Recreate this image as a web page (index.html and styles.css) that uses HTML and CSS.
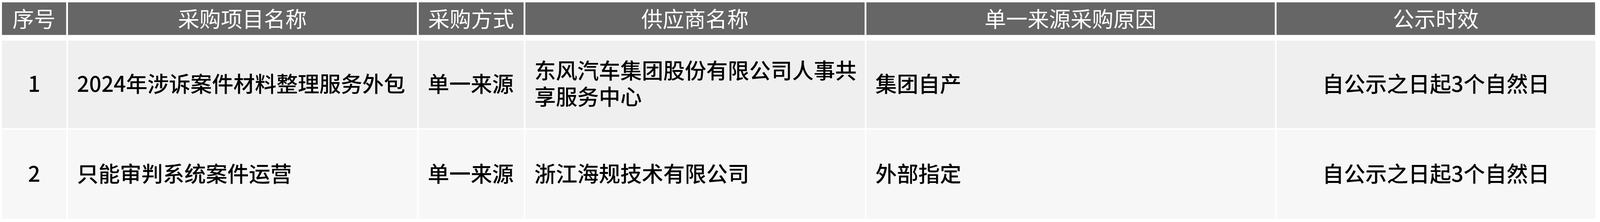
FILE: index.html
```html
<!DOCTYPE html>
<html lang="zh-CN">
<head>
<meta charset="utf-8">
<title>单一来源采购公示</title>
<link rel="stylesheet" href="styles.css">
</head>
<body>
<div class="grid">
  <div class="th">序号</div>
  <div class="th">采购项目名称</div>
  <div class="th">采购方式</div>
  <div class="th">供应商名称</div>
  <div class="th">单一来源采购原因</div>
  <div class="th">公示时效</div>

  <div class="td r1 center">1</div>
  <div class="td r1">2024年涉诉案件材料整理服务外包</div>
  <div class="td r1">单一来源</div>
  <div class="td r1">东风汽车集团股份有限公司人事共享服务中心</div>
  <div class="td r1">集团自产</div>
  <div class="td r1 center">自公示之日起3个自然日</div>

  <div class="td r2 center">2</div>
  <div class="td r2">只能审判系统案件运营</div>
  <div class="td r2">单一来源</div>
  <div class="td r2">浙江海规技术有限公司</div>
  <div class="td r2">外部指定</div>
  <div class="td r2 center">自公示之日起3个自然日</div>
</div>
</body>
</html>
```

FILE: styles.css
```css
*, *::before, *::after {
  box-sizing: border-box;
}

html, body {
  margin: 0;
  padding: 0;
  background: #ffffff;
}

body {
  font-family: "Noto Sans CJK SC", "Noto Sans", sans-serif;
  font-size: 55px;
  font-weight: 500;
  line-height: 67px;
  color: #000000;
}

.grid {
  display: grid;
  width: 4079px;
  grid-template-columns: 165px 894px 269px 869px 1046px 816px;
  grid-template-rows: 94px 224px 228px;
  column-gap: 4px;
  row-gap: 4px;
  margin: 6px 0 0 5px;
}

.th,
.td {
  min-width: 0;
  overflow: hidden;
}

.th {
  background: #666666;
  color: #ffffff;
  font-weight: 400;
  display: flex;
  align-items: center;
  justify-content: center;
  padding-bottom: 4px;
  border-right: 1px solid #c4c4c4;
  border-bottom: 1px solid #c4c4c4;
  margin-bottom: 10px;
}

.td {
  display: flex;
  align-items: center;
  padding: 0 18px 10px 23px;
}

.r1 {
  background: #efefef;
}

.r2 {
  background: #f7f7f7;
}

.center {
  justify-content: center;
  text-align: center;
  padding: 0 0 10px 0;
}
```
